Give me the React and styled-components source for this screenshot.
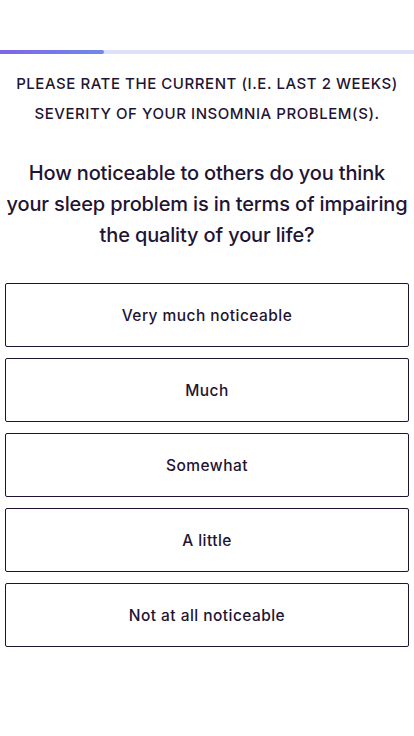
import React from "react";
import styled, { createGlobalStyle } from "styled-components";

const GlobalStyle = createGlobalStyle`
  body {
    margin: 0;
    background: #ffffff;
    font-family: "Inter", "Noto Sans", sans-serif;
    color: #1f1434;
  }
`;

const Page = styled.div`
  width: 414px;
  min-height: 736px;
  padding-top: 50px;
  box-sizing: border-box;
`;

const Track = styled.div`
  height: 4px;
  background: #dde1f5;
`;

const Fill = styled.div`
  height: 100%;
  border-radius: 0 3px 3px 0;
  background: linear-gradient(90deg, #7d66e8, #6f8ae6);
`;

const Header = styled.div`
  margin-top: 15px;
  text-align: center;
  font-size: 15px;
  font-weight: 500;
  line-height: 30px;
  text-transform: uppercase;
  letter-spacing: 0.55px;
`;

const Question = styled.h2`
  margin: 29px 0 0;
  text-align: center;
  font-size: 20px;
  font-weight: 500;
  line-height: 31px;
  letter-spacing: -0.15px;
`;

const Options = styled.div`
  display: flex;
  flex-direction: column;
  gap: 11px;
  padding: 0 5px;
  margin-top: 32px;
`;

const Option = styled.button`
  height: 64px;
  border: 1px solid #1f1434;
  border-radius: 2px;
  background: #fff;
  color: #1f1434;
  font-family: "Inter", "Noto Sans", sans-serif;
  font-size: 15.5px;
  font-weight: 500;
  letter-spacing: 0.45px;
  cursor: pointer;
`;

const options = [
  "Very much noticeable",
  "Much",
  "Somewhat",
  "A little",
  "Not at all noticeable",
];

export default function App() {
  const progress = 25;
  return (
    <>
      <GlobalStyle />
      <Page>
        <Track>
          <Fill style={{ width: `${progress}%` }} />
        </Track>
        <Header>
          Please rate the current (i.e. last 2 weeks)
          <br />
          severity of your insomnia problem(s).
        </Header>
        <Question>
          How noticeable to others do you think
          <br />
          your sleep problem is in terms of impairing
          <br />
          the quality of your life?
        </Question>
        <Options>
          {options.map((o) => (
            <Option key={o}>{o}</Option>
          ))}
        </Options>
      </Page>
    </>
  );
}
